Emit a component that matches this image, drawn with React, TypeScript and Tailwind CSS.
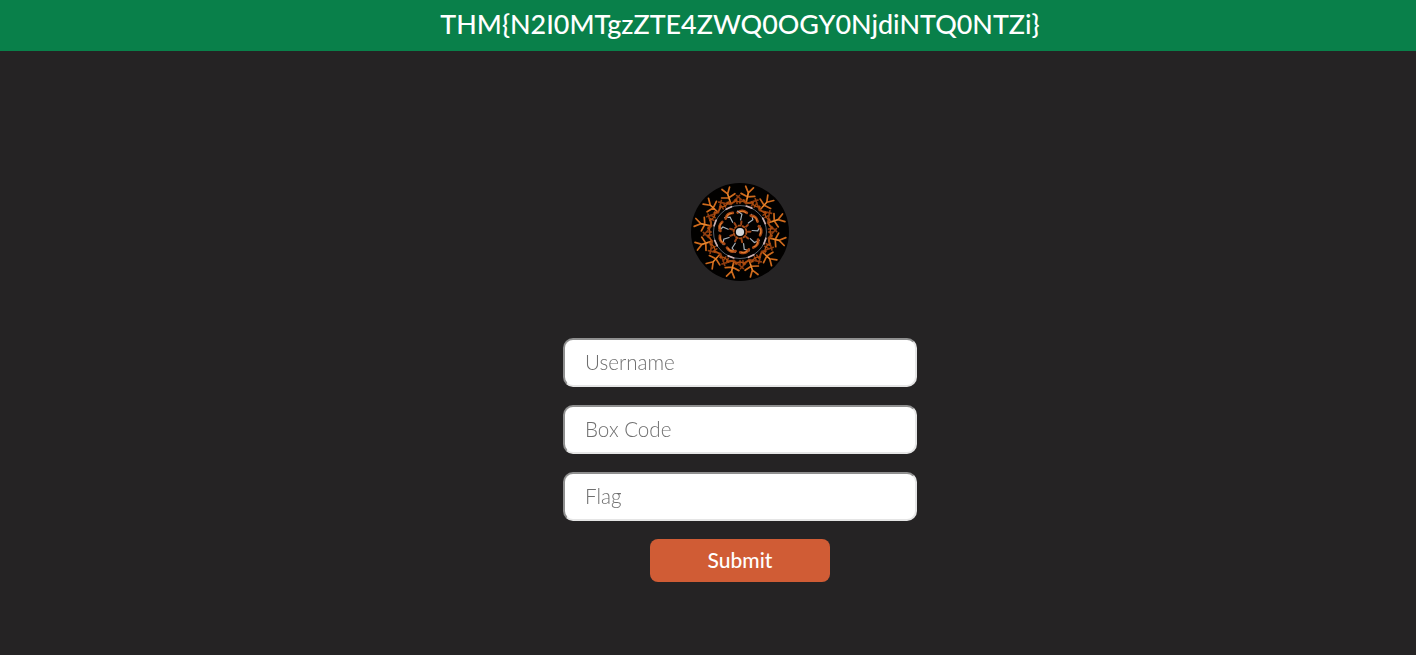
const outer = Array.from({ length: 12 }, (_, i) => i * 30 + 12);
const ring = Array.from({ length: 24 }, (_, i) => i * 15);
const inner = Array.from({ length: 9 }, (_, i) => i * 40 + 8);

function Logo() {
  return (
    <svg width="98" height="98" viewBox="-49 -49 98 98" className="block">
      <defs>
        <filter id="soft" x="-10%" y="-10%" width="120%" height="120%">
          <feGaussianBlur stdDeviation="0.4" />
        </filter>
      </defs>
      <circle r="49" fill="#020100" />
      <g filter="url(#soft)" fill="none" strokeLinecap="round">
        {outer.map((a) => (
          <g key={a} transform={`rotate(${a})`}>
            <path d="M0-29L-11-35M0-29L11-35M-7-33L-6-28M7-33L6-28" stroke="#8f3c0e" strokeWidth="1.6" />
            <path d="M0-31L0-40M0-40L-4-46M0-40L4-46M0-36L-7-38M0-36L7-38" stroke="#cf6a1c" strokeWidth="1.7" />
            <path d="M0-34L0-40" stroke="#ec9136" strokeWidth="0.9" />
          </g>
        ))}
        {ring.map((a) => (
          <path key={a} transform={`rotate(${a})`} d="M-5-32Q0-28 5-32" stroke="#b04e12" strokeWidth="1.3" />
        ))}
        <circle r="26.5" stroke="#59616b" strokeWidth="1" />
        {[20, 65, 110, 155, 200, 245, 290, 335].map((a) => (
          <path key={a} transform={`rotate(${a})`} d="M-3-26.5L3-26.5" stroke="#cdb0b0" strokeWidth="1.7" />
        ))}
        {inner.map((a) => (
          <g key={a} transform={`rotate(${a})`}>
            <path d="M7-10L11-14L9-19" stroke="#a7b1ba" strokeWidth="1.2" />
            <path d="M-5-19Q-1-23 4-20" stroke="#a94a17" strokeWidth="2.8" />
            <path d="M-3-20Q0-22 3-20" stroke="#e58232" strokeWidth="1" />
            <path d="M0-10.5L0-8" stroke="#9c4518" strokeWidth="2" />
          </g>
        ))}
        <circle r="6.4" stroke="#a94d18" strokeWidth="1.8" strokeDasharray="2 2" />
      </g>
      <circle r="4.1" fill="#d3d6d8" filter="url(#soft)" />
    </svg>
  );
}

const fields = ["Username", "Box Code", "Flag"];

export default function App() {
  return (
    <div className="min-h-[655px] bg-[#252324] font-['Lato',sans-serif]">
      <header className="flex h-[51px] items-center justify-center bg-[#09804a] pl-16 text-white">
        <h1 className="-mt-[2px] text-[26.9px] font-medium leading-none">THM{"{"}N2I0MTgzZTE4ZWQ0OGY0NjdiNTQ0NTZi{"}"}</h1>
      </header>
      <main className="flex flex-col items-center pl-16 pt-[132px]">
        <Logo />
        <form className="mt-[57px] flex flex-col items-center gap-[18px]">
          {fields.map((f) => (
            <input
              key={f}
              placeholder={f}
              className="h-[49px] w-[354px] rounded-[10px] border-2 border-b-[#e5e5e5] border-l-[#8f8f8f] border-r-[#e5e5e5] border-t-[#8f8f8f] bg-white px-5 pb-[2px] text-[20.6px] font-light text-black outline-none [will-change:transform] placeholder:text-[#6f6f6f]"
            />
          ))}
          <button
            type="button"
            className="h-[43px] w-[180px] rounded-lg bg-[#d05c35] pb-[2px] text-[21px] font-medium text-white"
          >
            Submit
          </button>
        </form>
      </main>
    </div>
  );
}
